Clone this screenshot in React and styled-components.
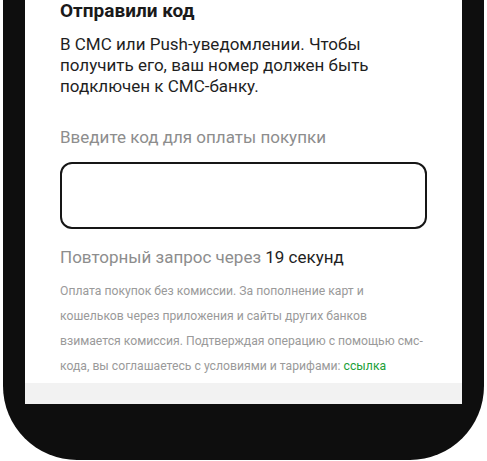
import React from "react";
import styled, { createGlobalStyle } from "styled-components";

const Global = createGlobalStyle`
  html, body {
    margin: 0;
    padding: 0;
    background: #ffffff;
  }
  body {
    font-family: Roboto, "Noto Sans", "Liberation Sans", sans-serif;
  }
`;

const Page = styled.div`
  width: 487px;
  height: 461px;
  padding: 0 3px;
  box-sizing: border-box;
`;

const Phone = styled.div`
  height: 460px;
  background: #0e0e0e;
  border-radius: 0 0 74px 74px;
  padding: 0 22px 56px;
  box-sizing: border-box;
`;

const Screen = styled.div`
  height: 100%;
  background: #ffffff;
  display: flex;
  flex-direction: column;
`;

const Content = styled.div`
  flex: 1;
  padding: 0 35px;
`;

const Title = styled.h2`
  margin: 0;
  font-size: 19px;
  font-weight: 700;
  line-height: 22px;
  color: #1a1a1a;
`;

const Lead = styled.p`
  margin: 12px 0 0;
  font-size: 17px;
  line-height: 21px;
  color: #1f1f1f;
`;

const Label = styled.div`
  margin-top: 30px;
  font-size: 17px;
  line-height: 20px;
  color: #8d8d8d;
`;

const CodeInput = styled.input`
  display: block;
  width: 100%;
  height: 67px;
  margin-top: 15px;
  box-sizing: border-box;
  border: 2px solid #161616;
  border-radius: 12px;
  background: #fff;
  font: inherit;
  font-size: 20px;
  padding: 0 16px;
  outline: none;
`;

const Resend = styled.div`
  margin-top: 18px;
  font-size: 17px;
  line-height: 20px;
  color: #8d8d8d;
`;

const Seconds = styled.span`
  color: #1f1f1f;
`;

const Note = styled.p`
  margin: 12px -12px 0 0;
  font-size: 12.2px;
  line-height: 25px;
  color: #9a9a9a;
`;

const Link = styled.a`
  color: #21a038;
  text-decoration: none;
`;

const Footer = styled.div`
  height: 21px;
  background: #f2f2f2;
`;

export default function App() {
  return (
    <Page>
      <Global />
      <Phone>
        <Screen>
          <Content>
            <Title>Отправили код</Title>
            <Lead>
              В СМС или Push-уведомлении. Чтобы получить его, ваш номер должен
              быть подключен к СМС-банку.
            </Lead>
            <Label>Введите код для оплаты покупки</Label>
            <CodeInput type="text" inputMode="numeric" aria-label="Код" />
            <Resend>
              Повторный запрос через <Seconds>19 секунд</Seconds>
            </Resend>
            <Note>
              Оплата покупок без комиссии. За пополнение карт и
              <br />
              кошельков через приложения и сайты других банков
              <br />
              взимается комиссия. Подтверждая операцию с помощью смс-
              <br />
              кода, вы соглашаетесь с условиями и тарифами:{" "}
              <Link href="#">ссылка</Link>
            </Note>
          </Content>
          <Footer />
        </Screen>
      </Phone>
    </Page>
  );
}
